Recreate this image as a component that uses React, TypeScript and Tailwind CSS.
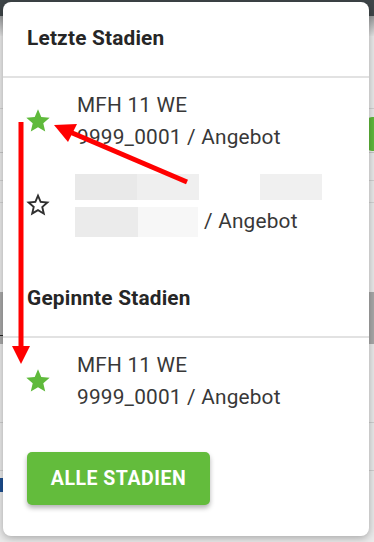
import React from "react";

interface StageItemProps {
    pinned: boolean;
    title?: string;
    sub?: string;
    redacted?: boolean;
}

function StarIcon({ filled }: { filled: boolean }) {
    return (
        <svg viewBox="0 0 24 24" className="w-[28px] h-[28px] shrink-0">
            {filled ? (
                <path fill="#5fba3b" d="M12 17.27L18.18 21l-1.64-7.03L22 9.24l-7.19-.61L12 2 9.19 8.63 2 9.24l5.46 4.73L5.82 21z" />
            ) : (
                <path
                    fill="#2f2f2f"
                    d="M22 9.24l-7.19-.62L12 2 9.19 8.63 2 9.24l5.46 4.73L5.82 21 12 17.27 18.18 21l-1.63-7.03L22 9.24zM12 15.4l-3.76 2.27 1-4.28-3.32-2.88 4.38-.38L12 6.1l1.71 4.04 4.38.38-3.32 2.88 1 4.28L12 15.4z"
                />
            )}
        </svg>
    );
}

function StageItem({ pinned, title, sub, redacted = false }: StageItemProps) {
    return (
        <div className="flex items-center py-[10px] pl-[21px]">
            <StarIcon filled={pinned} />
            <div className="ml-[25px] flex flex-col text-[20.8px] leading-[32px] tracking-[0.2px] text-[#383838]">
                {redacted ? (
                    <>
                        <div className="flex h-[32px] ml-[-2px] pt-[1px]">
                            <span className="w-[62px] h-[26px] bg-[#e9e9e9]" />
                            <span className="w-[62px] h-[26px] bg-[#efefef]" />
                            <span className="w-[61px]" />
                            <span className="w-[62px] h-[26px] bg-[#f0f0f0]" />
                        </div>
                        <div className="flex h-[32px] ml-[-2px]">
                            <span className="w-[63px] h-[30px] mt-[2px] bg-[#ebebeb]" />
                            <span className="w-[60px] h-[30px] mt-[2px] bg-[#f7f7f7]" />
                            <span className="ml-[6px]">/ Angebot</span>
                        </div>
                    </>
                ) : (
                    <>
                        <span>{title}</span>
                        <span>{sub}</span>
                    </>
                )}
            </div>
        </div>
    );
}

function SectionTitle({ children, className = "" }: { children: React.ReactNode; className?: string }) {
    return (
        <div className={"h-[74px] flex items-center pl-[24px] text-[20.8px] tracking-[0.2px] font-bold text-[#262626] " + className}>
            {children}
        </div>
    );
}

export default function App() {
    return (
        <div className="relative w-[374px] h-[542px] overflow-hidden bg-[#ebebeb]" style={{ fontFamily: "Roboto, 'Noto Sans', sans-serif" }}>
            {/* page behind the popup */}
            <div className="absolute inset-0">
                <div className="h-[16px] bg-[#3f4649]" />
                <div className="h-[20px] bg-gradient-to-b from-[#9a9c9d] to-[#e6e6e6]" />
                <div className="absolute left-0 right-0 top-[108px] h-px bg-[#d2d2d2]" />
                <div className="absolute left-0 right-0 top-[152px] h-px bg-[#c8c8c8]" />
                <div className="absolute left-0 right-0 top-[180px] h-px bg-[#d2d2d2]" />
                <div className="absolute left-0 right-0 top-[202px] h-px bg-[#d4d4d4]" />
                <div className="absolute left-0 right-0 top-[292px] h-[52px] bg-[#a9a9a9]" />
                <div className="absolute left-0 w-[4px] top-[335px] h-px bg-[#222]" />
                <div className="absolute left-0 right-0 top-[422px] h-px bg-[#d0d0d0]" />
                <div className="absolute left-0 right-0 top-[470px] h-px bg-[#d0d0d0]" />
                <div className="absolute left-0 w-[3px] top-[478px] h-[14px] bg-[#1d4f91]" />
                <div className="absolute right-[-12px] w-[20px] top-[117px] h-[34px] rounded-[6px] bg-[#5fba3b]" />
            </div>

            <div className="relative ml-[3px] mt-[2px] w-[366px] bg-white rounded-[8px] shadow-[0_2px_8px_rgba(0,0,0,0.3)] pb-[31px]">
                <SectionTitle>Letzte Stadien</SectionTitle>
                <div className="h-[2px] bg-[#e2e2e2]" />
                <div className="pt-px">
                    <StageItem pinned title="MFH 11 WE" sub="9999_0001 / Angebot" />
                    <StageItem pinned={false} redacted />
                </div>
                <SectionTitle className="mt-[15px]">Gepinnte Stadien</SectionTitle>
                <div className="h-[2px] bg-[#e2e2e2]" />
                <div className="pt-px">
                    <StageItem pinned title="MFH 11 WE" sub="9999_0001 / Angebot" />
                </div>
                <div className="pl-[24px] mt-[29px]">
                    <button
                        type="button"
                        className="w-[183px] h-[53px] rounded-[5px] bg-[#63bc3c] text-white text-[19.5px] tracking-[0.5px] font-bold uppercase shadow-[0_3px_5px_rgba(0,0,0,0.3)]"
                    >
                        Alle Stadien
                    </button>
                </div>
            </div>

            {/* red annotation arrows */}
            <svg className="absolute inset-0 pointer-events-none" width="374" height="542" viewBox="0 0 374 542">
                <line x1="21" y1="122" x2="21" y2="348" stroke="#ff0000" strokeWidth="5" />
                <polygon points="12,346 30,346 21,364" fill="#ff0000" />
                <line x1="187" y1="182" x2="70" y2="132" stroke="#ff0000" strokeWidth="5" />
                <polygon points="54,125 77,124 68,142" fill="#ff0000" />
            </svg>
        </div>
    );
}
